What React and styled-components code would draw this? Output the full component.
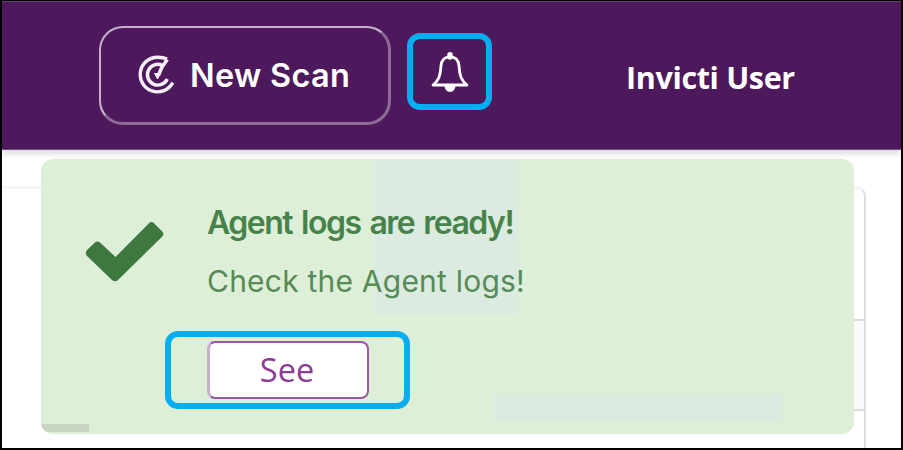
import React from 'react'
import styled, { createGlobalStyle } from 'styled-components'

const App = () => {
    return (
        <Page>
            <GlobalStyle />

            <Header>
                <ScanButton>
                    <ScanLogo />
                    <Label>New Scan</Label>
                </ScanButton>

                <BellButton>
                    <BellIcon />
                </BellButton>

                <UserName>Invicti User</UserName>
            </Header>

            <Content>
                <Panel>
                    <PanelRow />
                </Panel>

                <Toast>
                    <Tint $left={333} $top={1} $width={145} $height={155} />
                    <Tint $left={453} $top={235} $width={288} $height={27} />
                    <Progress />

                    <CheckIcon />
                    <ToastBody>
                        <ToastTitle>Agent logs are ready!</ToastTitle>
                        <ToastText>Check the Agent logs!</ToastText>
                        <Highlight>
                            <SeeButton><span>See</span></SeeButton>
                        </Highlight>
                    </ToastBody>
                </Toast>
            </Content>
        </Page>
    )
}

export default App

const ScanLogo = () => (
    <svg width="38" height="40" viewBox="0 0 38 40" fill="none" stroke="#f6eff8" strokeWidth="3.4">
        <path d="M29 4.1C26.5 2.8 23.5 2.2 19.8 2.2A17.3 17.3 0 1 0 34.8 27.6" />
        <path d="M24.5 10.4A10.4 10.4 0 1 0 29.3 24" />
        <path d="M29.3 4.5L24 12L20.5 20" strokeWidth="3.6" strokeLinejoin="round" />
        <path d="M16.5 18.5L22.5 18.5L19.5 24Z" fill="#f6eff8" strokeWidth="1" strokeLinejoin="round" />
    </svg>
)

const BellIcon = () => (
    <svg width="38" height="42" viewBox="0 0 38 42" fill="none" stroke="#fff" strokeWidth="2.8" strokeLinejoin="round">
        <path d="M19 5.8C12.9 5.8 10.2 9.5 9.9 15.5C9.5 24.5 7.7 29.5 2 34H36C30.3 29.5 28.5 24.5 28.1 15.5C27.8 9.5 25.1 5.8 19 5.8Z" />
        <path d="M19 3.8V6" strokeWidth="5.5" strokeLinecap="round" />
        <path d="M13.5 35H24.5C24 38.9 22 41 19 41S14 38.9 13.5 35Z" fill="#fff" stroke="none" />
    </svg>
)

const CheckIcon = () => (
    <CheckSvg width="79" height="61" viewBox="0 0 79 61">
        <path
            d="M2 29L10 21.5Q12.5 19.5 15 21.5L30.5 36L64 2.2Q66.5 0 69 2.2L77.3 10.5Q79.5 13 77.3 15.5L33 59Q30 61.5 27 59L2 35Q-.5 32 2 29Z"
            fill="#3e783f"
        />
    </CheckSvg>
)

const GlobalStyle = createGlobalStyle`
    * {
        box-sizing: border-box;
    }

    body {
        margin: 0;
    }

    button {
        padding: 0;
        font: inherit;
    }

    p {
        margin: 0;
    }
`

const Page = styled.div`
    display: flex;
    flex-direction: column;
    width: 903px;
    height: 450px;
    border: 2px solid #000;
    border-top-width: 1px;
    background: #fff;
    overflow: hidden;
    font-family: Inter, sans-serif;
`

const Header = styled.header`
    display: flex;
    align-items: flex-start;
    flex: none;
    height: 149px;
    padding: 24px 0 0 97px;
    background: #4d195c;
    border-top: 1px solid #67446f;
    border-bottom: 1px solid #795087;
    box-shadow: 0 2px 8px #c9c9d4;
    position: relative;
`

const ScanButton = styled.button`
    display: flex;
    align-items: center;
    width: 292px;
    height: 99px;
    padding-left: 37px;
    gap: 14px;
    border: 2px solid #c5afcb;
    border-right: 3px solid #8d6c98;
    border-bottom: 3px solid #8d6c98;
    border-radius: 24px;
    background: transparent;
    color: #fff;
`

const Label = styled.span`
    padding-top: 2px;
    font-size: 32.5px;
    font-weight: 600;
    line-height: 40px;
    letter-spacing: 0.3px;
    white-space: nowrap;
`

const BellButton = styled.button`
    display: flex;
    align-items: center;
    justify-content: center;
    width: 85px;
    height: 77px;
    margin: 7px 0 0 16px;
    border: 6px solid #06aef1;
    border-radius: 13px;
    background: transparent;
`

const UserName = styled.span`
    margin: 31px 0 0 134px;
    font-family: 'Open Sans', sans-serif;
    font-size: 30.5px;
    font-weight: 700;
    line-height: 40px;
    letter-spacing: -0.35px;
    white-space: nowrap;
    color: #fff;
`

const Content = styled.main`
    position: relative;
    flex: 1;
    padding-top: 36px;
`

const Panel = styled.section`
    width: 864px;
    height: 280px;
    padding-top: 130px;
    border: 2px solid #dedede;
    border-top: 3px solid #f5f5f5;
    border-left: 0;
    border-top-right-radius: 10px;
`

const PanelRow = styled.div`
    height: 92px;
    margin-left: 60px;
    border: 2px solid #dcdcdf;
    border-width: 2px 0;
    background: #fafafa;
`

/* floats over the panel */
const Toast = styled.div`
    position: absolute;
    left: 39px;
    top: 9px;
    display: flex;
    width: 813px;
    height: 275px;
    border-radius: 12px;
    background: #deefd8;
    overflow: hidden;
`

const Tint = styled.div`
    position: absolute;
    left: ${({ $left }) => $left}px;
    top: ${({ $top }) => $top}px;
    width: ${({ $width }) => $width}px;
    height: ${({ $height }) => $height}px;
    background: #dbebdf;
`

const Progress = styled.div`
    position: absolute;
    left: 0;
    bottom: 2px;
    width: 48px;
    height: 8px;
    background: #c8d4c2;
`

const CheckSvg = styled.svg`
    flex: none;
    margin: 62px 0 0 44px;
`

const ToastBody = styled.div`
    position: relative;
    padding: 43px 0 0 43px;
`

const ToastTitle = styled.p`
    font-size: 32px;
    font-weight: 600;
    line-height: 42px;
    letter-spacing: -1.5px;
    word-spacing: 2.4px;
    white-space: nowrap;
    color: #47824a;
`

const ToastText = styled.p`
    margin-top: 17px;
    font-size: 30px;
    line-height: 40px;
    letter-spacing: 0.22px;
    white-space: nowrap;
    color: #568a57;
`

const Highlight = styled.div`
    width: 245px;
    height: 78px;
    margin: 30px 0 0 -42px;
    padding: 4px 0 0 36px;
    border: 6px solid #06aef1;
    border-radius: 13px;
`

const SeeButton = styled.button`
    display: flex;
    align-items: center;
    justify-content: center;
    width: 162px;
    height: 58px;
    padding: 0 3px 3px 0;
    border: 2px solid #99579f;
    border-left: 3px solid #c9aecb;
    border-radius: 8px;
    background: #fff;
    font-family: 'Open Sans', sans-serif;
    font-size: 33.5px;
    line-height: 36px;
    color: #8c3c94;

    span {
        transform: scaleX(0.97);
    }
`
